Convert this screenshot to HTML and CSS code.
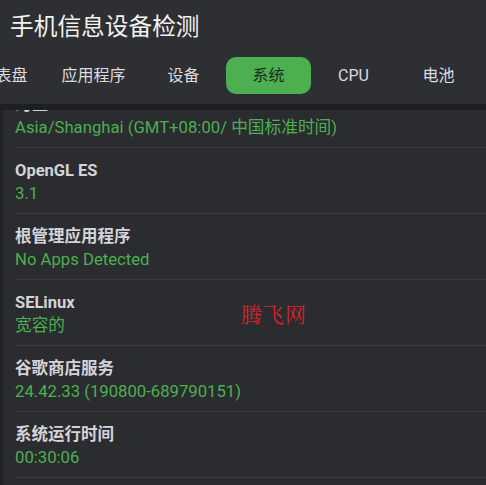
FILE: index.html
```html
<!DOCTYPE html>
<html lang="zh">
<head>
<meta charset="utf-8">
<link rel="stylesheet" href="styles.css">
</head>
<body>
<div class="app">
  <header class="header">
    <h1 class="title">手机信息设备检测</h1>
    <nav class="tabs">
      <div class="tab">仪表盘</div>
      <div class="tab tab-wide">应用程序</div>
      <div class="tab">设备</div>
      <div class="tab active">系统</div>
      <div class="tab">CPU</div>
      <div class="tab">电池</div>
    </nav>
  </header>
  <div class="band"></div>
  <main class="content">
    <div class="list">
      <div class="item"><div class="label">时区</div><div class="value">Asia/Shanghai (GMT+08:00/ 中国标准时间)</div></div>
      <div class="item"><div class="label">OpenGL ES</div><div class="value">3.1</div></div>
      <div class="item"><div class="label">根管理应用程序</div><div class="value">No Apps Detected</div></div>
      <div class="item"><div class="label">SELinux</div><div class="value">宽容的</div></div>
      <div class="item"><div class="label">谷歌商店服务</div><div class="value">24.42.33 (190800-689790151)</div></div>
      <div class="item"><div class="label">系统运行时间</div><div class="value">00:30:06</div></div>
    </div>
    <div class="watermark">腾飞网</div>
  </main>
</div>
</body>
</html>
```
FILE: styles.css
```css
html, body {
  margin: 0;
  padding: 0;
  background: #2b2c30;
}
body {
  font-family: Roboto, "Noto Sans CJK SC", sans-serif;
  width: 486px;
  height: 485px;
  overflow: hidden;
}
.app {
  display: flex;
  flex-direction: column;
  height: 485px;
}
.header {
  background: #2e2f33;
  height: 104px;
  flex: none;
  overflow: hidden;
}
.title {
  margin: 0;
  padding: 9px 0 0 10px;
  font-family: "Noto Sans CJK SC", sans-serif;
  font-weight: 400;
  font-size: 23.7px;
  line-height: 32px;
  color: #f2f2f2;
}
.tabs {
  display: flex;
  margin-left: -39px;
  margin-top: 16px;
  white-space: nowrap;
}
.tab {
  flex: none;
  min-width: 85px;
  box-sizing: border-box;
  padding: 0 15px;
  height: 37px;
  line-height: 37px;
  text-align: center;
  font-size: 16px;
  color: #dcdce0;
  border-radius: 10px;
}
.tab-wide {
  width: 95px;
}
.tab.active {
  background: #4caf50;
  color: #1e2a1e;
}
.band {
  height: 6px;
  background: #1e1f22;
  flex: none;
}
.content {
  flex: 1;
  position: relative;
  overflow: hidden;
  border-left: 3px solid #222326;
  background: #2b2c30;
}
.list {
  margin-top: -28px;
  padding-left: 12px;
}
.item {
  padding: 11px 0 8px;
  border-bottom: 1px solid #3c3d42;
}
.label {
  font-size: 16.5px;
  line-height: 23px;
  font-weight: 700;
  color: #d5d3da;
}
.value {
  font-size: 16.7px;
  line-height: 23px;
  color: #4caf50;
}
.watermark {
  position: absolute;
  left: 238px;
  top: 191px;
  font-family: "Noto Serif CJK SC", "Noto Sans CJK SC", serif;
  font-weight: 300;
  font-size: 21px;
  line-height: 24px;
  color: #e0242a;
  letter-spacing: 1px;
}
```
